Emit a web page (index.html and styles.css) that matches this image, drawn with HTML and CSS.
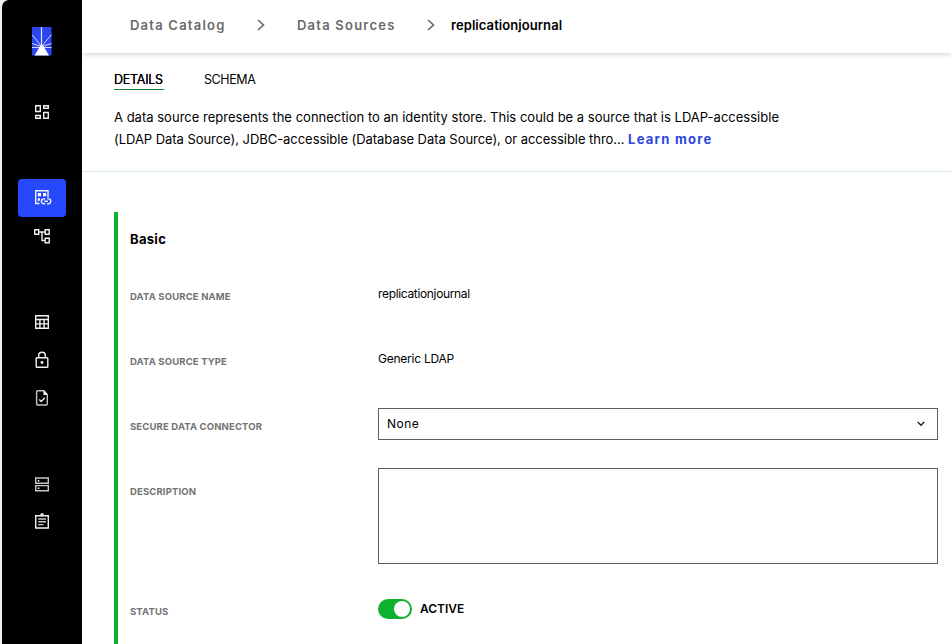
FILE: index.html
```html
<!DOCTYPE html>
<html lang="en">
<head>
<meta charset="utf-8">
<title>replicationjournal - Data Sources</title>
<link rel="stylesheet" href="styles.css">
</head>
<body>
<div class="app">
  <aside class="sidebar">
    <svg class="logo" width="20" height="29" viewBox="0 0 20 29">
      <rect width="19.500" height="28.500" fill="#2b45f0"/>
      <g stroke="#dfe5ff" stroke-width="1" fill="none">
        <path d="M9.500 0V19" stroke-width="1.200"/>
        <path d="M0 7.500L9.500 19.500L19.500 7.500M0 16.500L9.500 19.500L19.500 16.500M0 20.500H19.500" stroke-width=".9"/>
      </g>
      <path d="M9.500 17.500L12 20L17 28.500H2.500L7.500 20Z" fill="#fff"/>
    </svg>
    <nav class="nav">
      <div class="group">
        <a class="item"><svg class="icon" viewBox="0 0 18 18"><path d="M2.700 2.700h4.600v5.800h-4.600zM10.700 2.700h4.600v2.600h-4.600zM10.700 9.500h4.600v5.800h-4.600zM2.700 12.500h4.600v2.800h-4.600z"/></svg></a>
      </div>
      <div class="group">
        <a class="item active"><svg class="icon" viewBox="0 0 18 18"><path d="M15 8.500V1.700H2.700V14.500H6.500"/><path d="M4.800 4h3.200v3.200H4.800zM10 4h3.200v3.200H10zM4.800 9.200h2.400l-1 3H4.800z" fill="#fff" stroke="none"/><path d="M12.200 9.900h-1.400a2.400 2.400 0 0 0 0 4.800h1.400M14.200 9.900h1.200a2.400 2.400 0 0 1 0 4.800h-1.200M11.300 12.300h3.600"/></svg></a>
        <a class="item"><svg class="icon" viewBox="0 0 18 18"><path d="M1.700 2.700h4v4.600h-4zM12.200 2.700h4v4.600h-4zM12.200 11.200h4v4.600h-4z"/><path d="M6 5h6M9 5v8.500h3"/></svg></a>
      </div>
      <div class="group">
        <a class="item"><svg class="icon" viewBox="0 0 18 18"><path d="M2.700 2.700h12.600v12.600H2.700zM2.700 6.500h12.600M2.700 10.900h12.600M6.900 6.500v8.800M11.100 6.500v8.800"/></svg></a>
        <a class="item"><svg class="icon" viewBox="0 0 18 18"><rect x="3.200" y="6.700" width="11.600" height="9.600" rx=".8"/><path d="M5.700 6.500V4.500a3.300 3.300 0 0 1 6.600 0v2"/><circle cx="9" cy="11.500" r="1.400" fill="#fff" stroke="none"/></svg></a>
        <a class="item"><svg class="icon" viewBox="0 0 18 18"><path d="M4.500 1.700H11L14.300 5.500V15a1 1 0 0 1-1 1H4.600a1 1 0 0 1-1-1V2.700a1 1 0 0 1 .9-1z" stroke="#c4c4c4"/><path d="M10.500 1.500V6H14.500z" fill="#fff" stroke="none"/><path d="M6.300 10.500l2 2 3.500-3.700"/></svg></a>
      </div>
      <div class="group">
        <a class="item"><svg class="icon" viewBox="0 0 18 18"><path d="M2.700 3h12.600v5.200H2.700zM2.700 10.600h12.600v5.200H2.700z" stroke="#c8c8c8"/><path d="M4.800 4.900h1.500v1.500H4.800zM4.800 12.500h1.500v1.500H4.800z" fill="#fff" stroke="none"/></svg></a>
        <a class="item"><svg class="icon" viewBox="0 0 18 18"><path d="M2.700 2.700h12.600v12.300H2.700z"/><path d="M5.200 6h7.800M5.200 8.800h7.800M5.200 11.600h5.300" stroke="#c8c8c8"/><circle cx="9" cy="1.900" r="1.800" fill="#ddd" stroke="none"/></svg></a>
      </div>
    </nav>
  </aside>
  <main class="main">
    <header class="crumbs">
      <a class="crumb c1">Data Catalog</a>
      <svg class="sep s1" width="8" height="12" viewBox="0 0 8 12"><path d="M1 1l5.500 5L1 11"/></svg>
      <a class="crumb c2">Data Sources</a>
      <svg class="sep s2" width="8" height="12" viewBox="0 0 8 12"><path d="M1 1l5.500 5L1 11"/></svg>
      <span class="current">replicationjournal</span>
    </header>
    <section class="intro">
      <div class="tabs">
        <a class="tab selected">DETAILS</a>
        <a class="tab">SCHEMA</a>
      </div>
      <p class="about"><span class="line1">A data source represents the connection to an identity store. This could be a source that is LDAP-accessible</span><br><span class="line2">(LDAP Data Source), JDBC-accessible (Database Data Source), or accessible thro...</span> <a class="more">Learn more</a></p>
    </section>
    <section class="panel">
      <h2 class="heading">Basic</h2>
      <div class="row">
        <div class="label">DATA SOURCE NAME</div>
        <div class="value name">replicationjournal</div>
      </div>
      <div class="row">
        <div class="label">DATA SOURCE TYPE</div>
        <div class="value">Generic LDAP</div>
      </div>
      <div class="row">
        <div class="label">SECURE DATA CONNECTOR</div>
        <div class="select"><span>None</span><svg width="8" height="6" viewBox="0 0 8 6"><path d="M.700 1l3.300 3.300L7.300 1"/></svg></div>
      </div>
      <div class="row tall">
        <div class="label">DESCRIPTION</div>
        <div class="textarea"></div>
      </div>
      <div class="row">
        <div class="label">STATUS</div>
        <div class="status"><span class="toggle"><span class="knob"></span></span><span class="state">ACTIVE</span></div>
      </div>
    </section>
  </main>
</div>
</body>
</html>
```
FILE: styles.css
```css
* { box-sizing: border-box; }
body {
  margin: 0;
  background: #fff;
  color: #000;
  font-family: Inter, "Liberation Sans", sans-serif;
}
.app {
  display: flex;
  height: 644px;
  overflow: hidden;
  background: linear-gradient(to right, #eef3f1 2px, #fff 10px);
}
.sidebar {
  flex: none;
  width: 80px;
  margin-left: 2px;
  padding: 27px 16px 0;
  background: #000;
  border-radius: 7px 0 0 0;
}
.logo { display: block; margin-left: 14px; }
.nav {
  display: flex;
  flex-direction: column;
  gap: 48px;
  margin-top: 37px;
}
.item {
  display: flex;
  align-items: center;
  justify-content: center;
  width: 48px;
  height: 38px;
  border-radius: 4px;
}
.item.active { background: #2649ff; }
.icon {
  width: 18px;
  height: 18px;
  overflow: visible;
  fill: none;
  stroke: #f2f2f2;
  stroke-width: 1.4;
}
.main { flex: 1; min-width: 0; background: #fff; }
.crumbs {
  display: flex;
  align-items: center;
  height: 53px;
  padding: 0 0 3px 48px;
  box-shadow: 0 1px 6px rgba(0, 0, 0, .2);
  white-space: nowrap;
}
.crumb {
  color: #6a6a6a;
  font-size: 13px;
  font-weight: 600;
  letter-spacing: 1.22px;
}
.c1 { width: 127px; }
.c2 { width: 130px; }
.sep { fill: none; stroke: #666; stroke-width: 1.6; }
.s1 { margin-right: 32px; }
.s2 { margin-right: 16px; }
.current { font-size: 13px; font-weight: 600; letter-spacing: .07px; }
.intro {
  height: 119px;
  padding: 17px 32px 0;
  border-bottom: 1px solid #d5ecdc;
}
.tabs { display: flex; gap: 40px; }
.tab {
  height: 20px;
  font-size: 12.5px;
  line-height: 19px;
  letter-spacing: -.4px;
}
.selected {
  width: 50px;
  letter-spacing: -.25px;
  text-shadow: 0 0 .4px #000;
  border-bottom: 1px solid #16852f;
}
.about {
  margin: 16px 0 0;
  font-size: 13px;
  line-height: 22px;
  white-space: nowrap;
}
.line1 { letter-spacing: .013px; }
.line2 { letter-spacing: -.045px; }
.more { color: #2d46dd; font-size: 13px; font-weight: 700; letter-spacing: 1.25px; }
.line2, .more { line-height: 1; }
.panel {
  height: 432px;
  margin: 40px 13px 0 32px;
  padding: 18px 0 0 12px;
  border-left: 4px solid #0bb12f;
}
.heading {
  margin: 0 0 46px;
  font-size: 13px;
  line-height: 18px;
  font-weight: 700;
  letter-spacing: .3px;
}
.row {
  display: grid;
  grid-template-columns: 248px 1fr;
  align-items: start;
  height: 65px;
}
.row.tall { height: 120px; }
.label {
  margin-top: -4px;
  color: #737373;
  font-size: 9.5px;
  line-height: 14px;
  font-weight: 700;
  letter-spacing: .15px;
}
.value {
  font-size: 12px;
  line-height: 16px;
  margin-top: -8px;
  letter-spacing: -.25px;
}
.value.name { letter-spacing: -.34px; }
.select {
  display: flex;
  align-items: center;
  justify-content: space-between;
  height: 32px;
  margin-top: -16px;
  padding: 0 12px 0 8px;
  border: 1px solid #5f5f5f;
  font-size: 12px;
  letter-spacing: .5px;
}
.select span { padding-bottom: 1px; }
.select svg { fill: none; stroke: #222; stroke-width: 1.4; }
.textarea {
  height: 96px;
  margin-top: -21px;
  border: 1px solid #5f5f5f;
}
.status { display: flex; align-items: center; gap: 8px; margin-top: -10px; }
.toggle {
  display: flex;
  justify-content: flex-end;
  width: 34px;
  height: 20px;
  padding: 2px;
  border-radius: 10px;
  background: #0bb12f;
}
.knob { width: 16px; height: 16px; border-radius: 50%; background: #fff; }
.state { font-size: 12px; line-height: 16px; font-weight: 600; }
```
